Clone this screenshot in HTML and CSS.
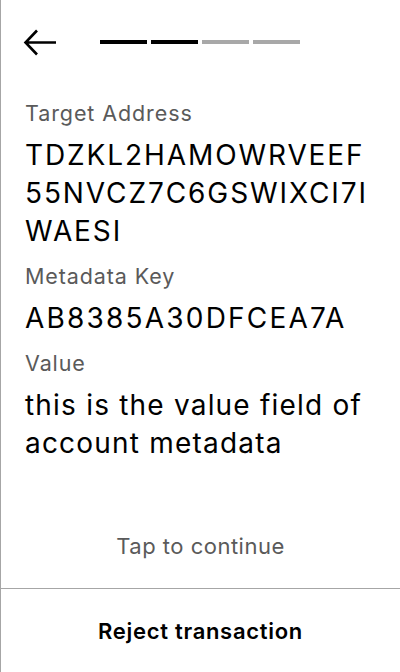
FILE: index.html
```html
<!DOCTYPE html>
<html lang="en">
<head>
<meta charset="utf-8">
<title>Confirm metadata</title>
<link rel="stylesheet" href="styles.css">
</head>
<body>
<div class="screen">
  <header class="header">
    <svg class="back" width="34" height="28" viewBox="0 0 34 28" aria-hidden="true">
      <path d="M33 13.5H2.5M14 1.5L2.5 13.5L14 25.5" fill="none" stroke="#000" stroke-width="2.6" stroke-linecap="butt" stroke-linejoin="miter"/>
    </svg>
    <div class="progress">
      <span class="seg done"></span>
      <span class="seg done"></span>
      <span class="seg"></span>
      <span class="seg"></span>
    </div>
  </header>
  <main class="content">
    <div class="field">
      <div class="label">Target Address</div>
      <div class="value caps">TDZKL2HAMOWRVEEF<br>55NVCZ7C6GSWIXCI7I<br>WAESI</div>
    </div>
    <div class="field">
      <div class="label">Metadata Key</div>
      <div class="value caps wide">AB8385A30DFCEA7A</div>
    </div>
    <div class="field">
      <div class="label">Value</div>
      <div class="value">this is the value field of<br>account metadata</div>
    </div>
  </main>
  <div class="tap">Tap to continue</div>
  <footer class="footer">Reject transaction</footer>
</div>
</body>
</html>
```
FILE: styles.css
```css
* { box-sizing: border-box; }
html, body {
  margin: 0;
  padding: 0;
  background: #fff;
}
body {
  font-family: Inter, "Noto Sans", sans-serif;
  color: #000;
}
.screen {
  width: 400px;
  height: 672px;
  display: flex;
  flex-direction: column;
  border-left: 1px solid #a6a6a6;
}
.header {
  display: flex;
  align-items: flex-start;
  padding: 29px 0 0 22px;
  height: 99px;
}
.back {
  display: block;
  margin-right: 43px;
}
.progress {
  display: flex;
  gap: 4px;
  margin-top: 11px;
}
.seg {
  display: block;
  width: 47px;
  height: 4px;
  background: #a8a8a8;
}
.seg.done {
  background: #000;
}
.content {
  flex: 1;
  padding: 0 0 0 24px;
}
.field {
  margin-bottom: 12px;
}
.label {
  font-size: 21.5px;
  line-height: 28px;
  letter-spacing: 0.9px;
  color: #5a5a5a;
  margin-bottom: 9px;
}
.value {
  font-size: 28px;
  line-height: 38px;
  letter-spacing: 1.2px;
  color: #000;
}
.value.caps {
  letter-spacing: 1.9px;
}
.value.wide {
  letter-spacing: 2.2px;
}
.tap {
  text-align: center;
  font-size: 22px;
  line-height: 28px;
  letter-spacing: 0.5px;
  color: #5a5a5a;
  padding-bottom: 28px;
}
.footer {
  height: 84px;
  border-top: 1px solid #a6a6a6;
  display: flex;
  align-items: center;
  justify-content: center;
  font-size: 22px;
  font-weight: 600;
  letter-spacing: 0.7px;
  color: #000;
}
```
